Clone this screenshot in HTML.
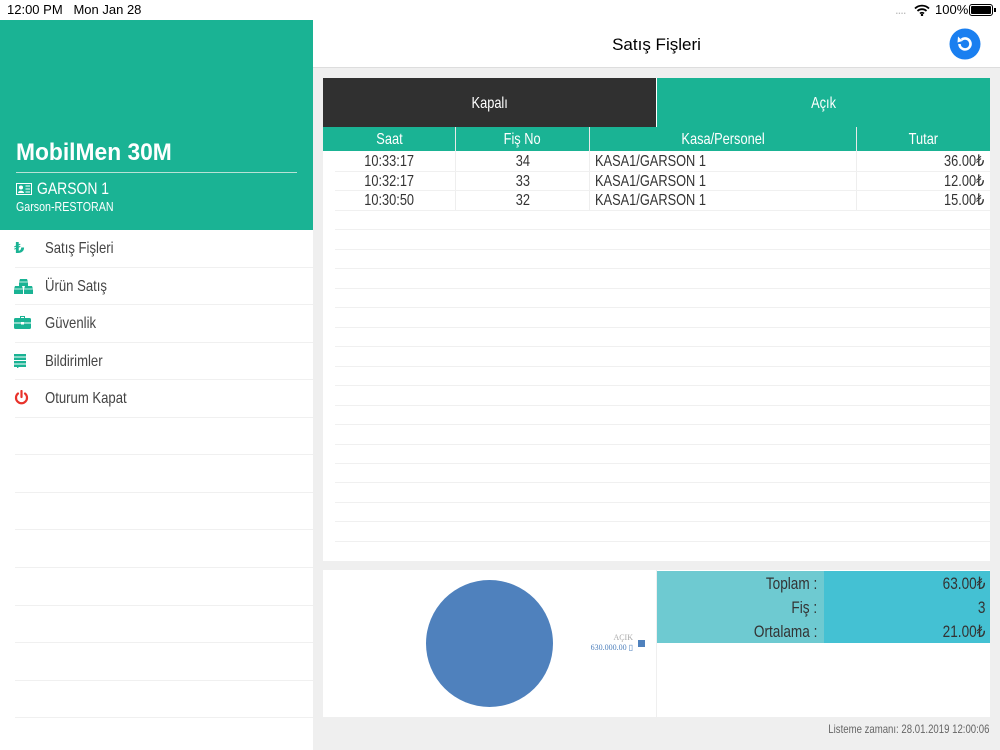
<!DOCTYPE html>
<html><head><meta charset="utf-8"><style>
*{margin:0;padding:0;box-sizing:border-box}
body{width:1000px;height:750px;position:relative;overflow:hidden;background:#efefef;font-family:"Liberation Sans",sans-serif;color:#333}
.a{position:absolute}
.hl{position:absolute;height:1px;background:#f0f0f0}
.menu{position:absolute;left:45px;font-size:16px;color:#444;transform:scaleX(.82);transform-origin:left}
.ic{position:absolute;left:14px}
.th{position:absolute;top:127px;height:24px;background:#1ab394;color:#fff;font-size:16px;text-align:center;line-height:26px;border-right:1px solid #e8e8e8}
.td{position:absolute;font-size:16px;line-height:20px;height:20px;color:#333}
.c{display:inline-block;transform:scaleX(.8);transform-origin:center}
.l{display:inline-block;transform:scaleX(.8);transform-origin:left}
.r{display:inline-block;transform:scaleX(.8);transform-origin:right}
</style></head><body>
<div class="a" style="left:0;top:0;width:1000px;height:20px;background:#fff"></div>
<div class="a" style="left:7px;top:2px;font-size:13px;color:#000">12:00 PM&nbsp;&nbsp; Mon Jan 28</div>
<div class="a" style="left:895px;top:2px;font-size:13px;color:#bbb;letter-spacing:-1px">....</div>
<svg class="a" style="left:914px;top:4px" width="16" height="12" viewBox="0 0 16 12"><path d="M1 4.5a10 10 0 0 1 14 0M3.5 7a6.5 6.5 0 0 1 9 0M6 9.5a3 3 0 0 1 4 0" stroke="#000" stroke-width="1.8" fill="none"/><circle cx="8" cy="11" r="1.2"/></svg>
<div class="a" style="left:935px;top:2px;font-size:13px;color:#000">100%</div>
<div class="a" style="left:969px;top:4px;width:24px;height:12px;border:1px solid #000;border-radius:3px;padding:1px"><div style="width:100%;height:100%;background:#000;border-radius:1px"></div></div>
<div class="a" style="left:994px;top:8px;width:2px;height:4px;background:#000"></div>

<div class="a" style="left:0;top:20px;width:313px;height:210px;background:#1ab394"></div>
<div class="a" style="left:16px;top:139px;font-size:24px;color:#fff;font-weight:bold;transform:scaleX(.95);transform-origin:left">MobilMen 30M</div>
<div class="a" style="left:16px;top:172px;width:281px;height:1px;background:#b7e2d6"></div>
<svg class="a" style="left:16px;top:183px" width="16" height="12" viewBox="0 0 16 12"><rect x="0.5" y="0.5" width="15" height="11" fill="none" stroke="#fff"/><circle cx="5" cy="4.5" r="2" fill="#fff"/><path d="M2 10c0-3 6-3 6 0z" fill="#fff"/><path d="M9.5 3h4.5M9.5 6h4.5M9.5 9h4.5" stroke="#fff"/></svg>
<div class="a" style="left:37px;top:179px;font-size:17px;color:#fff;transform:scaleX(.82);transform-origin:left">GARSON 1</div>
<div class="a" style="left:16px;top:199px;font-size:13px;color:#fff;transform:scaleX(.82);transform-origin:left">Garson-RESTORAN</div>
<div class="a" style="left:0;top:230px;width:313px;height:520px;background:#fff"></div>
<div class="hl" style="left:15px;width:298px;top:267px"></div>
<div class="hl" style="left:15px;width:298px;top:304px"></div>
<div class="hl" style="left:15px;width:298px;top:342px"></div>
<div class="hl" style="left:15px;width:298px;top:379px"></div>
<div class="hl" style="left:15px;width:298px;top:417px"></div>
<div class="hl" style="left:15px;width:298px;top:454px"></div>
<div class="hl" style="left:15px;width:298px;top:492px"></div>
<div class="hl" style="left:15px;width:298px;top:529px"></div>
<div class="hl" style="left:15px;width:298px;top:567px"></div>
<div class="hl" style="left:15px;width:298px;top:605px"></div>
<div class="hl" style="left:15px;width:298px;top:642px"></div>
<div class="hl" style="left:15px;width:298px;top:680px"></div>
<div class="hl" style="left:15px;width:298px;top:717px"></div>

<div class="ic" style="top:239px;color:#1ab394;font-weight:bold;font-size:15px;font-family:'DejaVu Sans',sans-serif">₺</div>
<div class="menu" style="top:240px">Satış Fişleri</div>
<svg class="ic" style="top:279px" width="20" height="15" viewBox="0 0 20 15"><g fill="#1ab394"><path d="M6 0h7l1 3v4H5V3z"/><path d="M1 7h7l1 3v5H0v-5z"/><path d="M11 7h7l1 3v5h-9v-5z"/></g><g stroke="#fff" stroke-width="0.8"><path d="M5 3h9M0 10h9M10 10h9"/></g></svg>
<div class="menu" style="top:278px">Ürün Satış</div>
<svg class="ic" style="top:316px" width="17" height="13" viewBox="0 0 17 13"><path d="M6 0h5v2h-1V1H7v1H6z" fill="#1ab394"/><rect x="0" y="2" width="17" height="11" rx="1.5" fill="#1ab394"/><path d="M0 7h17" stroke="#fff"/><rect x="7" y="6" width="3" height="2.5" fill="#fff"/></svg>
<div class="menu" style="top:315px">Güvenlik</div>
<svg class="ic" style="top:354px" width="13" height="14" viewBox="0 0 13 14"><g fill="#1ab394"><rect x="0" y="0" width="12" height="2.5"/><rect x="0" y="3.5" width="12" height="2.5"/><rect x="0" y="7" width="12" height="2.5"/><path d="M0 10.5h12V13H5l-2 1.5V13H0z"/></g></svg>
<div class="menu" style="top:353px">Bildirimler</div>
<svg class="ic" style="top:390px" width="15" height="15" viewBox="0 0 15 15"><path d="M4 3.5a5.5 5.5 0 1 0 7 0" stroke="#e8322b" stroke-width="2.2" fill="none" stroke-linecap="round"/><path d="M7.5 1v6" stroke="#e8322b" stroke-width="2.2" stroke-linecap="round"/></svg>
<div class="menu" style="top:390px">Oturum Kapat</div>

<div class="a" style="left:313px;top:20px;width:687px;height:48px;background:#fff;border-bottom:1px solid #ddd"></div>
<div class="a" style="left:313px;top:35px;width:687px;text-align:center;font-size:17px;color:#000">Satış Fişleri</div>
<svg class="a" style="left:949px;top:28px" width="32" height="32" viewBox="0 0 32 32"><circle cx="16" cy="16" r="15.5" fill="#1a7ff0"/><path d="M10.5 16a5.5 5.5 0 1 0 2-4.3" stroke="#fff" stroke-width="2.6" fill="none"/><path d="M9 8.5l4.5 4.5-5 1.5z" fill="#fff"/></svg>

<div class="a" style="left:323px;top:78px;width:667px;height:483px;background:#fff"></div>
<div class="a" style="left:323px;top:78px;width:333px;height:49px;background:#303030;color:#fff;text-align:center;line-height:51px;font-size:16px"><span class="c">Kapalı</span></div>
<div class="a" style="left:657px;top:78px;width:333px;height:49px;background:#1ab394;color:#fff;text-align:center;line-height:51px;font-size:16px"><span class="c">Açık</span></div>
<div class="th" style="left:323px;width:133px"><span class="c">Saat</span></div>
<div class="th" style="left:456px;width:134px"><span class="c">Fiş No</span></div>
<div class="th" style="left:590px;width:267px"><span class="c">Kasa/Personel</span></div>
<div class="th" style="left:857px;width:133px;border-right:none"><span class="c">Tutar</span></div>

<div class="a" style="left:455px;top:151px;width:1px;height:59px;background:#eee"></div>
<div class="a" style="left:589px;top:151px;width:1px;height:59px;background:#eee"></div>
<div class="a" style="left:856px;top:151px;width:1px;height:59px;background:#eee"></div>

<div class="td" style="left:323px;top:152px;width:133px;text-align:center"><span class="c">10:33:17</span></div>
<div class="td" style="left:456px;top:152px;width:134px;text-align:center"><span class="c">34</span></div>
<div class="td" style="left:595px;top:152px"><span class="l">KASA1/GARSON 1</span></div>
<div class="td" style="left:857px;top:152px;width:127px;text-align:right"><span class="r">36.00₺</span></div>
<div class="hl" style="left:335px;width:655px;top:171px"></div>
<div class="td" style="left:323px;top:172px;width:133px;text-align:center"><span class="c">10:32:17</span></div>
<div class="td" style="left:456px;top:172px;width:134px;text-align:center"><span class="c">33</span></div>
<div class="td" style="left:595px;top:172px"><span class="l">KASA1/GARSON 1</span></div>
<div class="td" style="left:857px;top:172px;width:127px;text-align:right"><span class="r">12.00₺</span></div>
<div class="hl" style="left:335px;width:655px;top:190px"></div>
<div class="td" style="left:323px;top:191px;width:133px;text-align:center"><span class="c">10:30:50</span></div>
<div class="td" style="left:456px;top:191px;width:134px;text-align:center"><span class="c">32</span></div>
<div class="td" style="left:595px;top:191px"><span class="l">KASA1/GARSON 1</span></div>
<div class="td" style="left:857px;top:191px;width:127px;text-align:right"><span class="r">15.00₺</span></div>
<div class="hl" style="left:335px;width:655px;top:210px"></div>
<div class="hl" style="left:335px;width:655px;top:229px"></div>
<div class="hl" style="left:335px;width:655px;top:249px"></div>
<div class="hl" style="left:335px;width:655px;top:268px"></div>
<div class="hl" style="left:335px;width:655px;top:288px"></div>
<div class="hl" style="left:335px;width:655px;top:307px"></div>
<div class="hl" style="left:335px;width:655px;top:327px"></div>
<div class="hl" style="left:335px;width:655px;top:346px"></div>
<div class="hl" style="left:335px;width:655px;top:366px"></div>
<div class="hl" style="left:335px;width:655px;top:385px"></div>
<div class="hl" style="left:335px;width:655px;top:405px"></div>
<div class="hl" style="left:335px;width:655px;top:424px"></div>
<div class="hl" style="left:335px;width:655px;top:444px"></div>
<div class="hl" style="left:335px;width:655px;top:463px"></div>
<div class="hl" style="left:335px;width:655px;top:482px"></div>
<div class="hl" style="left:335px;width:655px;top:502px"></div>
<div class="hl" style="left:335px;width:655px;top:521px"></div>
<div class="hl" style="left:335px;width:655px;top:541px"></div>

<div class="a" style="left:323px;top:570px;width:333px;height:147px;background:#fff"></div>
<div class="a" style="left:426px;top:580px;width:127px;height:127px;border-radius:50%;background:#4f81bd"></div>
<div class="a" style="left:590px;top:633px;width:43px;text-align:right;font-size:8px;color:#aaa;font-family:'Liberation Serif',serif">AÇIK</div>
<div class="a" style="left:560px;top:643px;width:73px;text-align:right;font-size:8px;color:#4f81bd;font-family:'Liberation Serif',serif">630.000.00 ▯</div>
<div class="a" style="left:638px;top:640px;width:7px;height:7px;background:#4f81bd"></div>

<div class="a" style="left:657px;top:570px;width:333px;height:147px;background:#fff"></div>
<div class="a" style="left:657px;top:571px;width:167px;height:72px;background:#6ecad1"></div>
<div class="a" style="left:824px;top:571px;width:166px;height:72px;background:#44c1d3"></div>
<div class="a" style="left:657px;top:572px;width:160px;text-align:right;font-size:17px;line-height:24px;color:#333"><span class="r">Toplam :</span><br><span class="r">Fiş :</span><br><span class="r">Ortalama :</span></div>
<div class="a" style="left:824px;top:572px;width:161px;text-align:right;font-size:17px;line-height:24px;color:#333"><span class="r">63.00₺</span><br><span class="r">3</span><br><span class="r">21.00₺</span></div>

<div class="a" style="left:600px;top:722px;width:389px;text-align:right;font-size:12px;color:#666"><span class="r">Listeme zamanı: 28.01.2019 12:00:06</span></div>
</body></html>
